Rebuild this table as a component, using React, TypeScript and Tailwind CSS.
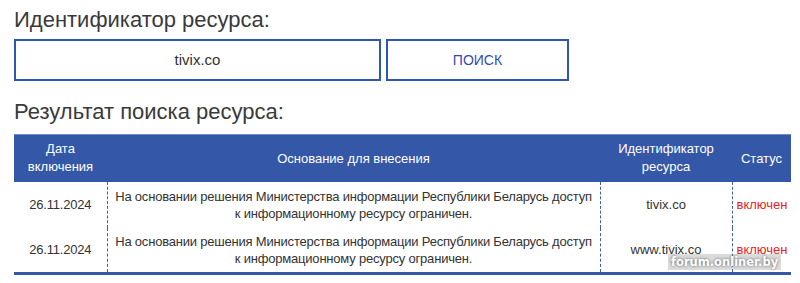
const rows = [
  { date: "26.11.2024", id: "tivix.co" },
  { date: "26.11.2024", id: "www.tivix.co" },
];

const REASON =
  "На основании решения Министерства информации Республики Беларусь доступ к информационному ресурсу ограничен.";

export default function App() {
  return (
    <div
      className="w-[800px] h-[283px] bg-white text-[#333] relative overflow-hidden"
      style={{ fontFamily: '"Liberation Sans", Arial, sans-serif' }}
    >
      <div className="pl-[14px] pr-[9px] pt-[5px]">
        <h1 className="text-[22px] leading-[30px] font-normal text-[#3a3a3a]">Идентификатор ресурса:</h1>
        <div className="flex gap-[5px] mt-[4px]">
          <div className="w-[367px] h-[42px] border-2 border-[#2f55b5] flex items-center justify-center text-[15px]">
            tivix.co
          </div>
          <button className="w-[183px] h-[42px] border-2 border-[#2f55b5] flex items-center justify-center text-[14px] text-[#2f4ea8]">
            ПОИСК
          </button>
        </div>
        <h2 className="text-[22px] leading-[30px] font-normal text-[#3a3a3a] mt-[16px]">Результат поиска ресурса:</h2>

        <table className="mt-[7px] w-[777px] table-fixed border-collapse text-[13px] leading-[17px]">
          <thead>
            <tr className="bg-[#3457a8] text-white h-[47px] border-t border-[#6f8cc9]">
              <th className="w-[93px] font-normal leading-[18px]">Дата<br />включения</th>
              <th className="w-[493px] font-normal">Основание для внесения</th>
              <th className="w-[132px] font-normal leading-[18px]">Идентификатор<br />ресурса</th>
              <th className="font-normal">Статус</th>
            </tr>
          </thead>
          <tbody className="border-b-[3px] border-[#3457a8]">
            {rows.map((r, i) => (
              <tr key={i} className="h-[46px]">
                <td className="text-center tracking-[-0.2px]">{r.date}</td>
                <td className="text-center px-[6px] tracking-[-0.2px] border-l border-r border-dashed border-[#3a5db0]">{REASON}</td>
                <td className="text-center border-r border-dashed border-[#3a5db0]">{r.id}</td>
                <td className="text-[#e8231f] pl-[4px]">включен</td>
              </tr>
            ))}
          </tbody>
        </table>
      </div>

      <div
        className="absolute left-[668px] top-[254px] px-[3px] text-white font-bold text-[11.5px] leading-[16px] bg-[#8a8a8a]/30 [text-shadow:0_0_3px_#555]"
        style={{ fontFamily: '"DejaVu Sans", sans-serif' }}
      >
        forum.onliner.by
      </div>
    </div>
  );
}
